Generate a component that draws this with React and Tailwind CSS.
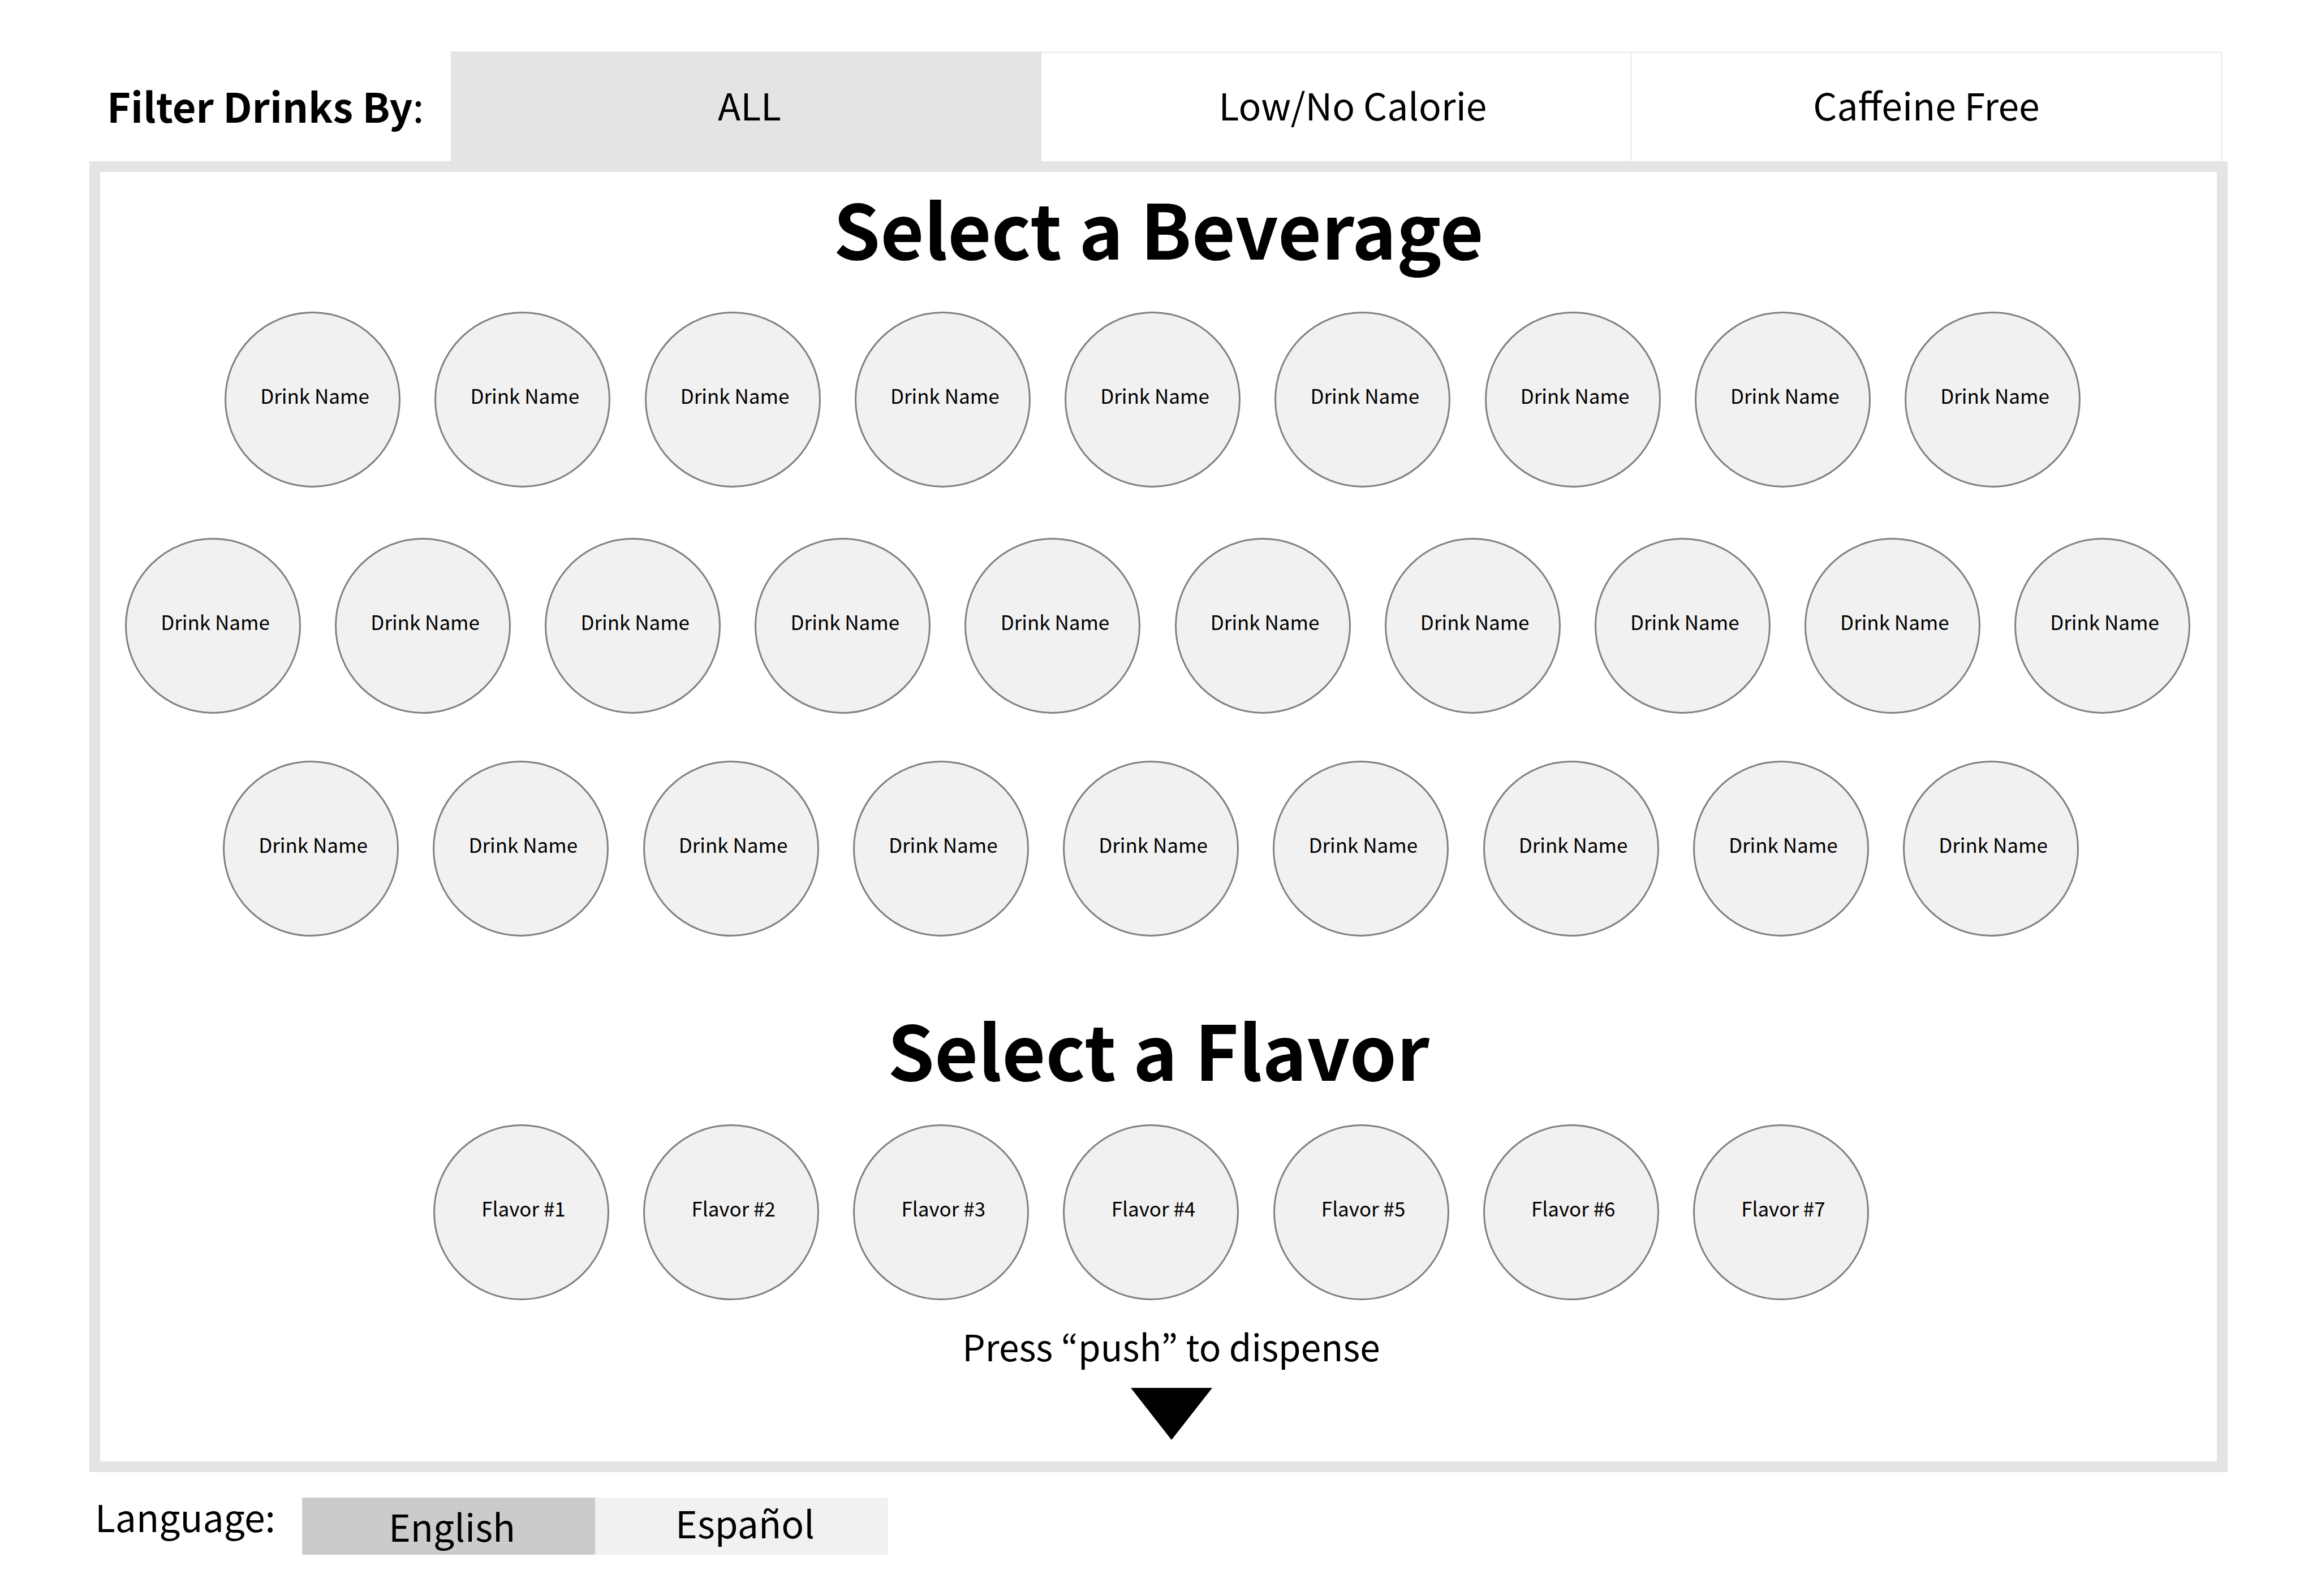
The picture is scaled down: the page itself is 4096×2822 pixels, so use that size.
import { useState } from "react";

const filters = [
  { label: "ALL", pad: "pl-3" },
  { label: "Low/No Calorie", pad: "pl-15" },
  { label: "Caffeine Free", pad: "" },
];

const languages = [
  { label: "English", pad: "pb-1" },
  { label: "Español", pad: "pb-4" },
];

const drinkRows = [
  { count: 9, box: "mt-[66px] pl-[220px] pr-[241px]" },
  { count: 10, box: "mt-[89px] pl-[44px] pr-[47px]" },
  { count: 9, box: "mt-[83px] pl-[217px] pr-[244px]" },
];

const flavors = [1, 2, 3, 4, 5, 6, 7].map((n) => "Flavor #" + n);

function Circle({ label, selected, onSelect }) {
  return (
    <button
      type="button"
      aria-pressed={selected}
      onClick={onSelect}
      className="flex size-[311px] shrink-0 items-center justify-center rounded-full border-3 border-[#808080] bg-[#f1f1f1] pb-4 pl-2 text-[35px] leading-[48px]"
    >
      {label}
    </button>
  );
}

export default function App() {
  const [filter, setFilter] = useState("ALL");
  const [language, setLanguage] = useState("English");
  const [drink, setDrink] = useState(null);
  const [flavor, setFlavor] = useState(null);

  return (
    <div className="min-h-screen bg-white px-[158px] pt-[91px] pb-[74px] font-['Noto_Sans_CJK_KR',sans-serif] text-[66px] leading-[100px] text-black">
      <header className="flex pr-[9px]">
        <div className="flex w-[639px] shrink-0 items-center pb-1 pl-[31px] text-[72px]">
          <span className="font-bold">Filter Drinks By</span>:
        </div>
        <nav aria-label="Filter drinks" className="grid h-[194px] flex-1 grid-cols-3">
          {filters.map(({ label, pad }) => (
            <button
              key={label}
              type="button"
              aria-pressed={filter === label}
              onClick={() => setFilter(label)}
              className={
                "flex items-center justify-center border-t-3 pb-3 " +
                pad +
                (filter === label
                  ? " border-[#e4e4e4] bg-[#e4e4e4]"
                  : " border-r-3 border-[#f1f1f1] bg-white")
              }
            >
              {label}
            </button>
          ))}
        </nav>
      </header>

      <main className="border-19 border-[#e4e4e4] pb-[38px]">
        <h1 className="pt-[13px] text-center text-[133px] leading-[168px] font-bold">
          Select a Beverage
        </h1>
        {drinkRows.map(({ count, box }, row) => (
          <div key={row} className={"flex justify-between " + box}>
            {Array.from({ length: count }, (_, i) => (
              <Circle
                key={i}
                label="Drink Name"
                selected={drink === row + "-" + i}
                onSelect={() => setDrink(row + "-" + i)}
              />
            ))}
          </div>
        ))}

        <h2 className="pt-[113px] text-center text-[133px] leading-[168px] font-bold">
          Select a Flavor
        </h2>
        <div className="mt-[51px] flex justify-between pr-[615px] pl-[589px]">
          {flavors.map((name) => (
            <Circle
              key={name}
              label={name}
              selected={flavor === name}
              onSelect={() => setFlavor(name)}
            />
          ))}
        </div>

        <div className="mt-[30px] flex flex-col items-center pl-[45px]">
          <p className="text-[64px]">Press “push” to dispense</p>
          <svg viewBox="0 0 144 92" className="mt-[25px] h-[92px] w-[144px]" aria-hidden="true">
            <path d="M0 0H144L72 92Z" fill="#000" />
          </svg>
        </div>
      </main>

      <footer className="mt-[45px] flex">
        <span className="w-[376px] shrink-0 pl-[10px] leading-[64px]">Language:</span>
        <div className="flex h-[101px]" role="group" aria-label="Language">
          {languages.map(({ label, pad }) => (
            <button
              key={label}
              type="button"
              aria-pressed={language === label}
              onClick={() => setLanguage(label)}
              className={
                "flex w-[518px] items-center justify-center pl-3 " +
                pad +
                (language === label ? " bg-[#cbcbcb]" : " bg-[#f1f1f1]")
              }
            >
              {label}
            </button>
          ))}
        </div>
      </footer>
    </div>
  );
}
